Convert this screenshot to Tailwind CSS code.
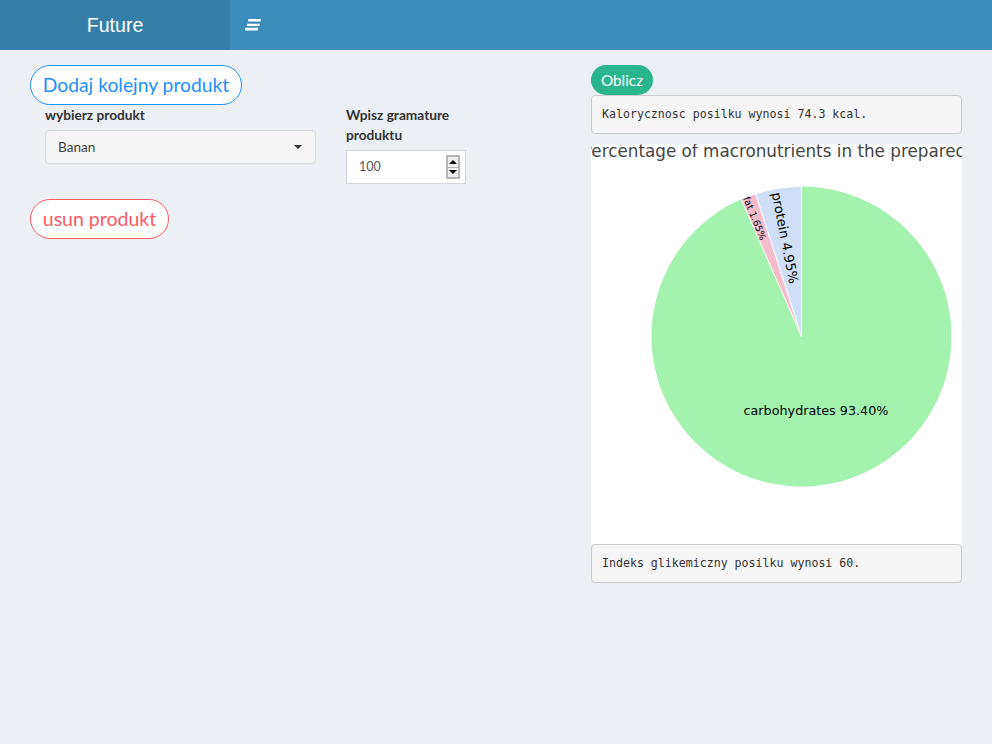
<!DOCTYPE html>
<html lang="en">
<head>
  <meta charset="UTF-8">
  <title>Future</title>
  <script src="https://cdn.jsdelivr.net/npm/@tailwindcss/browser@4"></script>
</head>
<body class="h-[744px] overflow-hidden bg-[#ecf0f5] text-[#333] font-['Lato','Noto_Sans',sans-serif]">

  <!-- Header -->
  <header class="flex h-[50px] bg-[#3c8dbc] text-white">
    <div class="w-[230px] pt-[1px] bg-[#367fa9] flex items-center justify-center font-['Liberation_Sans',sans-serif] text-[19.6px]">Future</div>
    <button class="w-[46px] flex items-center justify-center">
      <svg width="18" height="14" viewBox="0 0 18 14" fill="#fff">
        <path d="M4.5 1H17L16.5 3.5H4ZM3.2 5.7H15.8L15.3 8H2.8ZM1.5 9.8H14.2L13.7 12.4H1Z"/>
      </svg>
    </button>
  </header>

  <main class="flex pl-[30px] pr-[30px] pt-[15px]">
    <!-- Left column -->
    <section class="w-[561px] shrink-0">
      <button class="block h-[40px] w-[212px] rounded-[20px] border border-[#1e90ff] bg-white text-[19.3px] text-[#1e90ff]">Dodaj kolejny produkt</button>
      <div class="flex pl-[15px] gap-[30px] mb-[15px]">
        <div class="w-[271px]">
          <label class="block font-bold text-[13.7px] leading-[20px] mb-[5px]">wybierz produkt</label>
          <div class="h-[34px] flex items-center justify-between pl-[12px] pr-[13px] bg-[#f4f4f4] border border-[#dadada] rounded-[4px] text-[13.6px] text-[#444]">
            <span>Banan</span>
            <span class="w-0 h-0 border-x-[4px] border-x-transparent border-t-[4px] border-t-[#333]"></span>
          </div>
        </div>
        <div class="w-[120px]">
          <label class="block font-bold text-[13.7px] leading-[20px] mb-[5px]">Wpisz gramature produktu</label>
          <div class="h-[34px] flex items-center justify-between pl-[12px] pr-[5px] bg-white border border-[#d2d6de] text-[12.5px] text-[#555]">
            <span class="pt-[1px]">100</span>
            <div class="w-[14px] h-[24px] flex flex-col bg-[#efefef] border-2 border-[#b4b4b4]">
              <span class="flex-1 flex items-center justify-center border-b border-[#b4b4b4]"><span class="w-0 h-0 border-x-[4px] border-x-transparent border-b-[4px] border-b-black"></span></span>
              <span class="flex-1 flex items-center justify-center"><span class="w-0 h-0 border-x-[4px] border-x-transparent border-t-[4px] border-t-black"></span></span>
            </div>
          </div>
        </div>
      </div>
      <button class="block h-[40px] w-[139px] rounded-[20px] border border-[#ff5964] bg-white text-[19.5px] text-[#ff5964]">usun produkt</button>
    </section>

    <!-- Right column -->
    <section class="w-[371px] shrink-0">
      <button class="block h-[30px] w-[62px] rounded-[15px] bg-[#2ab58c] text-white text-[15.3px]">Oblicz</button>
      <pre class="h-[39px] px-[10px] flex items-center bg-[#f5f5f5] border border-[#ccc] rounded-[4px] font-['DejaVu_Sans_Mono',monospace] text-[11.6px] text-[#333]">Kalorycznosc posilku wynosi 74.3 kcal.</pre>
      <svg class="block mt-[10px] bg-white" width="371" height="400" viewBox="0 0 371 400">
        <text x="206.5" y="13" text-anchor="middle" font-family="DejaVu Sans, sans-serif" font-size="16.8" fill="#444">Percentage of macronutrients in the prepared meal</text>
        <g transform="translate(210.5 192.5)" stroke="#fff" stroke-width="1">
          <path fill="#a3f2ae" d="M0 0V-150A150 150 0 1 1 -60.4 -137.3Z" stroke="none"/>
          <path fill="#f5bccb" d="M0 0L-60.4 -137.3A150 150 0 0 1 -45.9 -142.8Z"/>
          <path fill="#cfdff7" d="M0 0L-45.9 -142.8A150 150 0 0 1 0 -150Z"/>
        </g>
        <g font-family="DejaVu Sans, sans-serif" fill="#000" text-anchor="middle">
          <text x="225" y="271" font-size="12.75">carbohydrates 93.40%</text>
          <text transform="translate(193.5 94) rotate(79)" y="4" font-size="13.2">protein 4.95%</text>
          <text transform="translate(163.5 74.5) rotate(68)" y="3" font-size="9.5">fat 1.65%</text>
        </g>
      </svg>
      <pre class="h-[39px] px-[10px] flex items-center bg-[#f5f5f5] border border-[#ccc] rounded-[4px] font-['DejaVu_Sans_Mono',monospace] text-[11.6px] text-[#333]">Indeks glikemiczny posilku wynosi 60.</pre>
    </section>
  </main>
</body>
</html>
